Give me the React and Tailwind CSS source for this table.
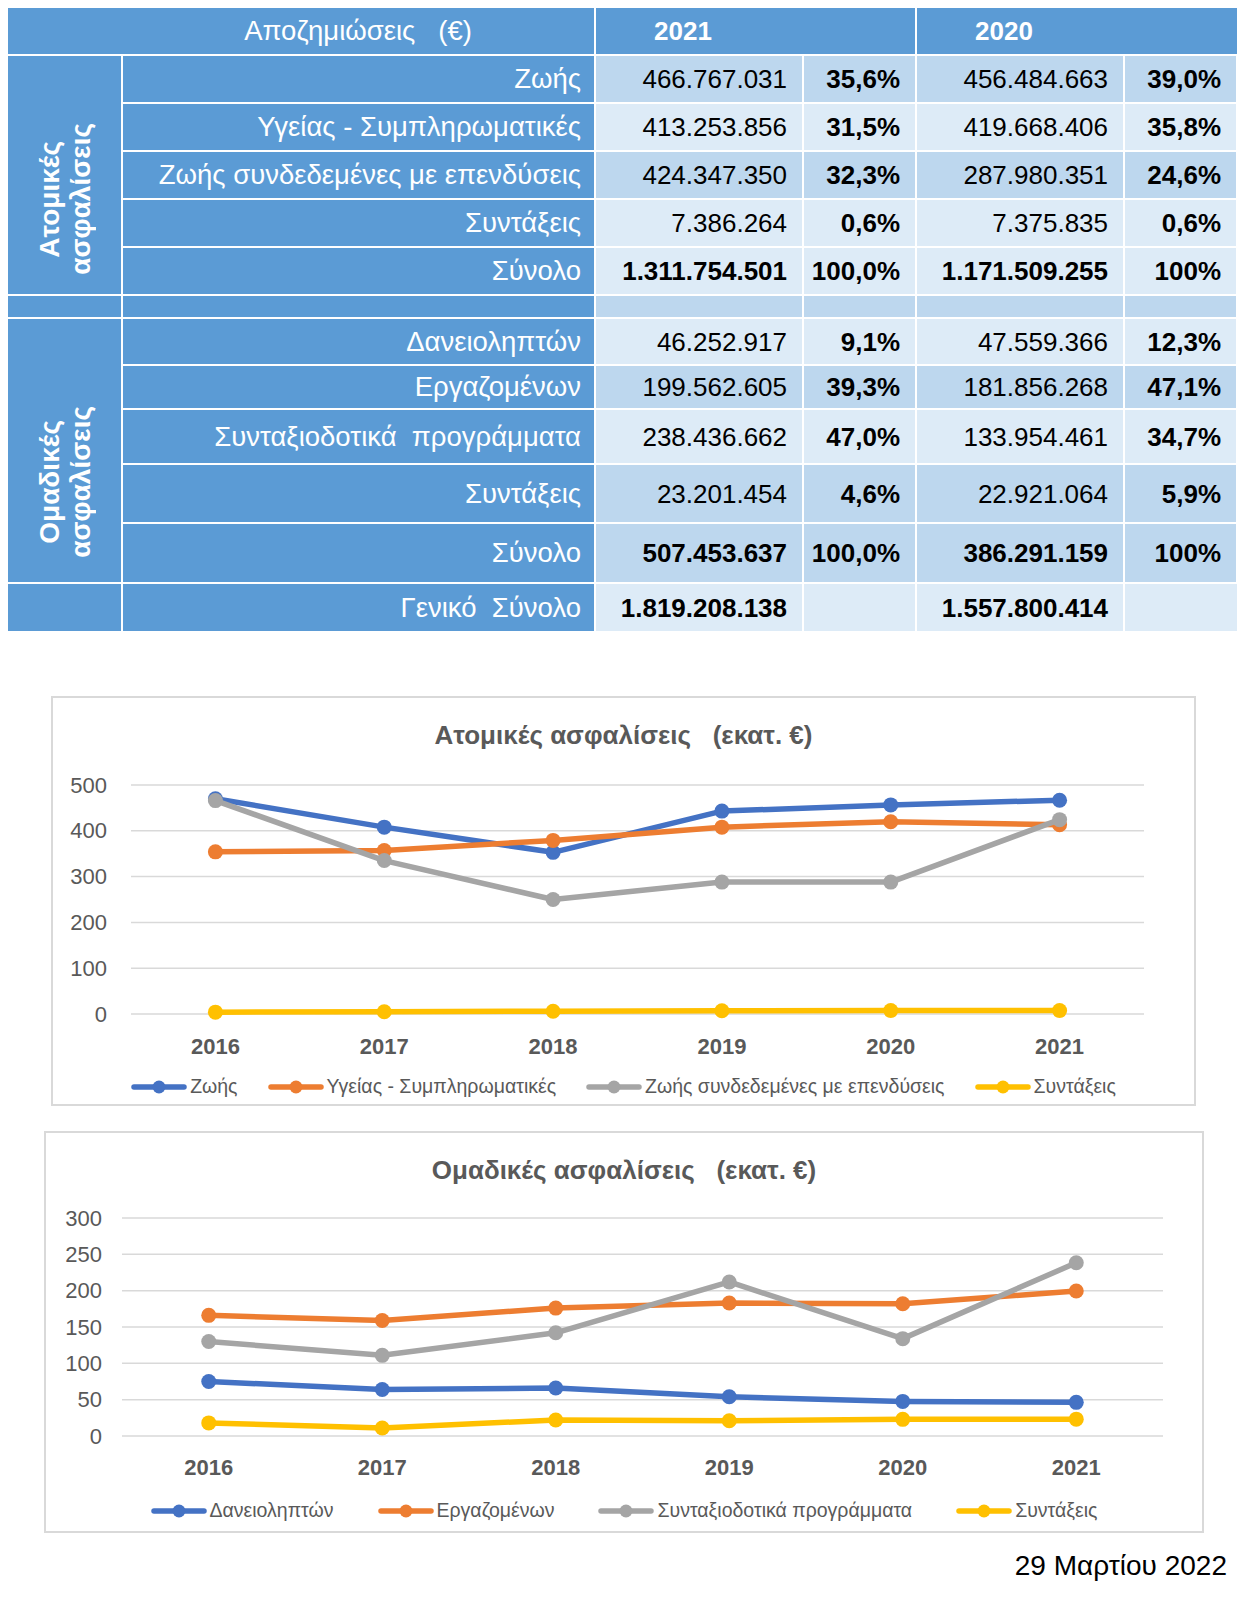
import React from "react";

const years = ["2016", "2017", "2018", "2019", "2020", "2021"];

const topRows = [
  { label: "Ζωής", v1: "466.767.031", p1: "35,6%", v2: "456.484.663", p2: "39,0%", dark: true, h: "h-[48px]" },
  { label: "Υγείας - Συμπληρωματικές", v1: "413.253.856", p1: "31,5%", v2: "419.668.406", p2: "35,8%", dark: false, h: "h-[48px]" },
  { label: "Ζωής συνδεδεμένες με επενδύσεις", v1: "424.347.350", p1: "32,3%", v2: "287.980.351", p2: "24,6%", dark: true, h: "h-[48px]" },
  { label: "Συντάξεις", v1: "7.386.264", p1: "0,6%", v2: "7.375.835", p2: "0,6%", dark: false, h: "h-[48px]" },
  { label: "Σύνολο", v1: "1.311.754.501", p1: "100,0%", v2: "1.171.509.255", p2: "100%", dark: false, h: "h-[48px]", total: true },
];

const groupRows = [
  { label: "Δανειοληπτών", v1: "46.252.917", p1: "9,1%", v2: "47.559.366", p2: "12,3%", dark: false, h: "h-[47px]" },
  { label: "Εργαζομένων", v1: "199.562.605", p1: "39,3%", v2: "181.856.268", p2: "47,1%", dark: true, h: "h-[44px]" },
  { label: "Συνταξιοδοτικά  προγράμματα", v1: "238.436.662", p1: "47,0%", v2: "133.954.461", p2: "34,7%", dark: false, h: "h-[55px]" },
  { label: "Συντάξεις", v1: "23.201.454", p1: "4,6%", v2: "22.921.064", p2: "5,9%", dark: true, h: "h-[59px]" },
  { label: "Σύνολο", v1: "507.453.637", p1: "100,0%", v2: "386.291.159", p2: "100%", dark: true, h: "h-[60px]", total: true },
];

const chartA = {
  title: "Ατομικές ασφαλίσεις   (εκατ. €)",
  max: 500,
  ticks: [0, 100, 200, 300, 400, 500],
  series: [
    { name: "Ζωής", color: "#4472c4", data: [470, 408, 353, 443, 456.5, 466.8] },
    { name: "Υγείας - Συμπληρωματικές", color: "#ed7d31", data: [354, 357, 379, 408, 419.7, 413.3] },
    { name: "Ζωής συνδεδεμένες με επενδύσεις", color: "#a5a5a5", data: [466, 335, 250, 288, 288, 424.3] },
    { name: "Συντάξεις", color: "#ffc000", data: [4, 5, 6, 7, 7.4, 7.4] },
  ],
};

const chartB = {
  title: "Ομαδικές ασφαλίσεις   (εκατ. €)",
  max: 300,
  ticks: [0, 50, 100, 150, 200, 250, 300],
  series: [
    { name: "Δανειοληπτών", color: "#4472c4", data: [75, 64, 66, 54, 47.6, 46.3] },
    { name: "Εργαζομένων", color: "#ed7d31", data: [166, 159, 176, 183, 181.9, 199.6] },
    { name: "Συνταξιοδοτικά προγράμματα", color: "#a5a5a5", data: [130, 111, 142, 212, 134, 238.4] },
    { name: "Συντάξεις", color: "#ffc000", data: [18, 11, 22, 21, 22.9, 23.2] },
  ],
};

function Row({ r }) {
  const shade = r.dark ? "bg-[#bdd7ee]" : "bg-[#ddebf7]";
  const num = r.total ? "font-bold" : "font-normal";
  return (
    <>
      <td className={`${r.h} border-2 border-white bg-[#5b9bd5] pr-[13px] text-right text-[27.5px] text-white whitespace-pre`}>
        {r.label}
      </td>
      <td className={`border-2 border-white ${shade} pr-[15px] text-right ${num}`}>{r.v1}</td>
      <td className={`border-2 border-white ${shade} pr-[15px] text-right font-bold`}>{r.p1}</td>
      <td className={`border-2 border-white ${shade} pr-[15px] text-right ${num}`}>{r.v2}</td>
      <td className={`border-2 border-white ${shade} pr-[15px] text-right font-bold`}>{r.p2}</td>
    </>
  );
}

function ClaimsTable() {
  return (
    <table className="table-fixed border-collapse w-[1229px] text-[26px] leading-none text-black">
      <colgroup>
        <col className="w-[114px]" />
        <col className="w-[473px]" />
        <col className="w-[208px]" />
        <col className="w-[113px]" />
        <col className="w-[208px]" />
        <col className="w-[113px]" />
      </colgroup>
      <tbody>
        <tr>
          <td colSpan={2} className="h-[47px] border-2 border-white border-t-0 border-l-0 bg-[#5b9bd5] pl-[114px] text-center text-[27.5px] text-white">
            Αποζημιώσεις&nbsp;&nbsp; (€)
          </td>
          <td colSpan={2} className="border-2 border-white border-t-0 bg-[#5b9bd5] pl-[58px] text-left font-bold text-white">
            2021
          </td>
          <td colSpan={2} className="border-2 border-white border-t-0 border-r-0 bg-[#5b9bd5] pl-[58px] text-left font-bold text-white">
            2020
          </td>
        </tr>
        {topRows.map((r, i) => (
          <tr key={r.label + i}>
            {i === 0 && (
              <td rowSpan={5} className="border-2 border-white border-l-0 bg-[#5b9bd5] p-0">
                <div className="flex justify-center pt-[48px]">
                  <div className="[writing-mode:vertical-rl] rotate-180 text-center text-[28px] font-bold leading-[31px] text-white">
                    Ατομικές
                    <br />
                    ασφαλίσεις
                  </div>
                </div>
              </td>
            )}
            <Row r={r} />
          </tr>
        ))}
        <tr>
          <td className="h-[23px] border-2 border-white border-l-0 bg-[#5b9bd5]" />
          <td className="border-2 border-white bg-[#5b9bd5]" />
          <td className="border-2 border-white bg-[#bdd7ee]" />
          <td className="border-2 border-white bg-[#bdd7ee]" />
          <td className="border-2 border-white bg-[#bdd7ee]" />
          <td className="border-2 border-white bg-[#bdd7ee]" />
        </tr>
        {groupRows.map((r, i) => (
          <tr key={r.label + i}>
            {i === 0 && (
              <td rowSpan={5} className="border-2 border-white border-l-0 bg-[#5b9bd5] p-0">
                <div className="flex justify-center pt-[62px]">
                  <div className="[writing-mode:vertical-rl] rotate-180 text-center text-[28px] font-bold leading-[31px] text-white">
                    Ομαδικές
                    <br />
                    ασφαλίσεις
                  </div>
                </div>
              </td>
            )}
            <Row r={r} />
          </tr>
        ))}
        <tr>
          <td className="h-[48px] border-2 border-white border-l-0 border-b-0 bg-[#5b9bd5]" />
          <td className="border-2 border-white border-b-0 bg-[#5b9bd5] pr-[13px] text-right text-[27.5px] text-white whitespace-pre">
            Γενικό&nbsp; Σύνολο
          </td>
          <td className="border-2 border-white border-b-0 bg-[#ddebf7] pr-[15px] text-right font-bold">1.819.208.138</td>
          <td className="border-2 border-white border-b-0 bg-[#ddebf7]" />
          <td className="border-2 border-white border-b-0 bg-[#ddebf7] pr-[15px] text-right font-bold">1.557.800.414</td>
          <td className="border-2 border-white border-b-0 border-r-0 bg-[#ddebf7]" />
        </tr>
      </tbody>
    </table>
  );
}

function LegendItem({ color, name }) {
  return (
    <div className="flex items-center">
      <svg width="56" height="14" viewBox="0 0 56 14">
        <line x1="3" y1="7" x2="53" y2="7" stroke={color} strokeWidth="5.5" strokeLinecap="round" />
        <circle cx="28" cy="7" r="6.5" fill={color} />
      </svg>
      <span className="ml-[3px]">{name}</span>
    </div>
  );
}

function LineChart({ chart, width, plotLeft, plotRight, yTop, yBottom, labelX, xLabelY, height, gap }) {
  const step = (plotRight - plotLeft) / years.length;
  const cx = (i) => plotLeft + step / 2 + step * i;
  const cy = (v) => yBottom - (v / chart.max) * (yBottom - yTop);
  return (
    <>
      <div className="pt-[21px] h-[53px] text-center text-[26px] leading-[32px] font-bold text-[#595959] whitespace-pre">
        {chart.title}
      </div>
      <svg width={width} height={height} className="block">
        {chart.ticks.map((t) => (
          <g key={t}>
            <line x1={plotLeft} x2={plotRight} y1={cy(t)} y2={cy(t)} stroke="#d9d9d9" strokeWidth="1.5" />
            <text x={labelX} y={cy(t)} textAnchor="end" dominantBaseline="central" fontSize="22" fill="#595959">
              {t}
            </text>
          </g>
        ))}
        {years.map((y, i) => (
          <text key={y} x={cx(i)} y={xLabelY} textAnchor="middle" dominantBaseline="central" fontSize="22" fontWeight="bold" fill="#595959">
            {y}
          </text>
        ))}
        {chart.series.map((s) => (
          <g key={s.name}>
            <polyline
              points={s.data.map((v, i) => `${cx(i)},${cy(v)}`).join(" ")}
              fill="none"
              stroke={s.color}
              strokeWidth="5.5"
              strokeLinejoin="round"
              strokeLinecap="round"
            />
            {s.data.map((v, i) => (
              <circle key={i} cx={cx(i)} cy={cy(v)} r="7.5" fill={s.color} />
            ))}
          </g>
        ))}
      </svg>
      <div className={`flex h-[32px] items-center justify-center ${gap} text-[19.5px] text-[#595959]`}>
        {chart.series.map((s) => (
          <LegendItem key={s.name} color={s.color} name={s.name} />
        ))}
      </div>
    </>
  );
}

export default function App() {
  return (
    <div className="w-[1259px] bg-white font-['Liberation_Sans',Arial,sans-serif]">
      <div className="pt-[8px] pl-[8px]">
        <ClaimsTable />
      </div>
      <div className="ml-[51px] mt-[65px] h-[410px] w-[1145px] border-2 border-[#d9d9d9]">
        <LineChart
          chart={chartA}
          width={1141}
          height={320}
          plotLeft={78}
          plotRight={1091}
          yTop={34}
          yBottom={263}
          labelX={54}
          xLabelY={295}
          gap="gap-[30px]"
        />
      </div>
      <div className="ml-[44px] mt-[25px] h-[402px] w-[1160px] border-2 border-[#d9d9d9]">
        <LineChart
          chart={chartB}
          width={1156}
          height={309}
          plotLeft={76}
          plotRight={1117}
          yTop={32}
          yBottom={250}
          labelX={56}
          xLabelY={281}
          gap="gap-[44px]"
        />
      </div>
      <div className="pr-[32px] pt-[17px] pb-[20px] text-right text-[28px] leading-[32px] text-black">
        29 Μαρτίου 2022
      </div>
    </div>
  );
}
